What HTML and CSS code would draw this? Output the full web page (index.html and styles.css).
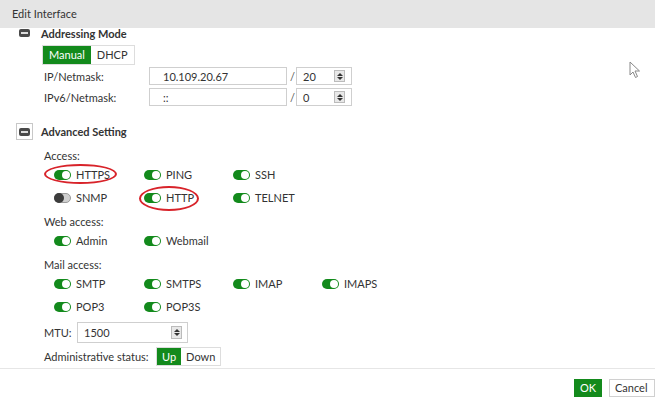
FILE: index.html
```html
<!DOCTYPE html>
<html>
<head>
<meta charset="utf-8">
<link rel="stylesheet" href="styles.css">
</head>
<body>
<div class="dialog">
  <div class="header">Edit Interface</div>
  <div class="body">
    <div class="section-title first"><span class="collapse plain"><span class="minus"></span></span>Addressing Mode</div>
    <div class="content">
      <div class="seg"><span class="seg-btn on">Manual</span><span class="seg-btn">DHCP</span></div>
      <div class="field-rows">
        <div class="field-row">
          <span class="flabel">IP/Netmask:</span>
          <span class="input wide">10.109.20.67</span>
          <span class="slash">/</span>
          <span class="input num">20<span class="spin"><i class="up"></i><i class="down"></i></span></span>
        </div>
        <div class="field-row">
          <span class="flabel">IPv6/Netmask:</span>
          <span class="input wide">::</span>
          <span class="slash">/</span>
          <span class="input num">0<span class="spin"><i class="up"></i><i class="down"></i></span></span>
        </div>
      </div>
    </div>

    <div class="section-title second"><span class="collapse"><span class="minus"></span></span>Advanced Setting</div>
    <div class="content">
      <div class="glabel first-label">Access:</div>
      <div class="toggles">
        <span class="tg"><span class="sw on"></span>HTTPS</span>
        <span class="tg"><span class="sw on"></span>PING</span>
        <span class="tg"><span class="sw on"></span>SSH</span>
        <span class="tg"></span>
        <span class="tg"><span class="sw off"></span>SNMP</span>
        <span class="tg"><span class="sw on"></span>HTTP</span>
        <span class="tg"><span class="sw on"></span>TELNET</span>
      </div>
      <div class="glabel">Web access:</div>
      <div class="toggles">
        <span class="tg"><span class="sw on"></span>Admin</span>
        <span class="tg"><span class="sw on"></span>Webmail</span>
      </div>
      <div class="glabel">Mail access:</div>
      <div class="toggles">
        <span class="tg"><span class="sw on"></span>SMTP</span>
        <span class="tg"><span class="sw on"></span>SMTPS</span>
        <span class="tg"><span class="sw on"></span>IMAP</span>
        <span class="tg"><span class="sw on"></span>IMAPS</span>
        <span class="tg"><span class="sw on"></span>POP3</span>
        <span class="tg"><span class="sw on"></span>POP3S</span>
      </div>
      <div class="mtu-row">
        <span class="mlabel">MTU:</span>
        <span class="input mtu">1500<span class="spin"><i class="up"></i><i class="down"></i></span></span>
      </div>
      <div class="status-row">
        <span class="slabel">Administrative status:</span>
        <span class="seg small"><span class="seg-btn on">Up</span><span class="seg-btn">Down</span></span>
      </div>
    </div>
  </div>
  <div class="footer">
    <span class="btn ok">OK</span>
    <span class="btn cancel">Cancel</span>
  </div>

  <span class="mark m1"></span>
  <span class="mark m2"></span>
  <svg class="cursor" width="12" height="18" viewBox="0 0 12 18"><path d="M1 1 L1 14 L4 11 L6.5 16.5 L8.5 15.5 L6 10 L10.5 10 Z" fill="#fff" stroke="#888" stroke-width="1" stroke-linejoin="round"/></svg>
</div>
</body>
</html>
```

FILE: styles.css
```css
* { box-sizing: border-box; }
body {
  margin: 0;
  font-family: Lato, "Open Sans", sans-serif;
  font-size: 11px;
  color: #333;
  background: #fff;
}
.dialog {
  width: 655px;
  height: 400px;
  display: flex;
  flex-direction: column;
  overflow: hidden;
  position: relative;
}
.header {
  flex: none;
  height: 28px;
  line-height: 28px;
  background: #e5e5e5;
  padding-left: 12px;
  position: relative;
  z-index: 1;
}
.body {
  flex: 1;
  overflow: hidden;
}
.section-title {
  display: flex;
  align-items: center;
  gap: 8px;
  height: 17px;
  padding-left: 16px;
  font-weight: bold;
}
.section-title.first { margin-top: -3px; height: 16px; }
.section-title.second { margin-top: 17px; }
.collapse {
  width: 17px;
  height: 17px;
  border: 1px solid #c8c8c8;
  display: flex;
  align-items: center;
  justify-content: center;
}
.collapse.plain { border-color: transparent; }
.minus {
  width: 11px;
  height: 8px;
  background: #4a4a4a;
  border-radius: 2px;
  display: flex;
  align-items: center;
  justify-content: center;
}
.minus::before {
  content: "";
  width: 7px;
  height: 2px;
  background: #ddd;
}
.content { padding-left: 44px; }
.seg {
  display: inline-flex;
  margin-top: 4px;
  margin-left: -2px;
  border: 1px solid #ddd;
}
.seg-btn {
  height: 18px;
  line-height: 18px;
  padding: 0 6px;
  background: #fff;
}
.seg-btn.on { background: #138a1c; color: #fff; }
.field-rows {
  display: flex;
  flex-direction: column;
  gap: 3px;
  margin-top: 2px;
}
.field-row {
  display: flex;
  align-items: center;
  height: 18px;
}
.flabel { width: 105px; }
.input {
  height: 18px;
  border: 1px solid #cfcfcf;
  display: flex;
  align-items: center;
  padding-left: 11px;
  position: relative;
}
.wide { width: 138px; padding-left: 13px; }
.slash { width: 9px; padding-left: 3px; color: #555; }
.num { width: 56px; padding-left: 6px; }
.spin {
  margin-left: auto;
  margin-right: 6px;
  width: 11px;
  height: 12px;
  border: 1px solid #bbb;
  background: #e8e8e8;
  display: flex;
  flex-direction: column;
  align-items: center;
  justify-content: center;
  gap: 1px;
}
.spin i {
  width: 0;
  height: 0;
  border-left: 3px solid transparent;
  border-right: 3px solid transparent;
}
.spin .up { border-bottom: 3px solid #333; }
.spin .down { border-top: 3px solid #333; }
.glabel {
  height: 14px;
  line-height: 14px;
  margin-top: 6px;
}
.glabel.first-label { margin-top: 9px; }
.toggles {
  display: grid;
  grid-template-columns: 90px 89px 89px 89px;
  grid-auto-rows: 23px;
  padding-left: 10px;
}
.tg {
  display: flex;
  align-items: center;
  gap: 5px;
}
.sw {
  width: 17px;
  height: 10px;
  border-radius: 5px;
  position: relative;
  flex: none;
}
.sw::after {
  content: "";
  position: absolute;
  top: 1px;
  width: 8px;
  height: 8px;
  border-radius: 50%;
}
.sw.on { background: #138a1c; }
.sw.on::after { right: 1px; background: #fff; }
.sw.off { background: #cfcfcf; border: 1px solid #9a9a9a; }
.sw.off::after { left: -1px; top: -1px; width: 10px; height: 10px; background: #3c3c3c; }
.mtu-row {
  display: flex;
  align-items: center;
  margin-top: 4px;
  height: 21px;
}
.mlabel { width: 33px; }
.mtu { width: 111px; height: 21px; padding-left: 6px; }
.mtu .spin { margin-right: 5px; height: 13px; }
.status-row {
  display: flex;
  align-items: center;
  margin-top: 4px;
  height: 18px;
}
.slabel { width: 112px; }
.seg.small { margin: 0; }
.seg.small .seg-btn { height: 17px; line-height: 17px; padding: 0 5px; }
.footer {
  flex: none;
  height: 32px;
  border-top: 1px solid #e6e6e6;
  display: flex;
  justify-content: flex-end;
  align-items: flex-start;
  gap: 7px;
  padding-top: 10px;
}
.btn {
  height: 18px;
  line-height: 18px;
  padding: 0 6px;
}
.btn.ok { background: #138a1c; color: #fff; width: 28px; text-align: center; padding: 0; }
.btn.cancel { border: 1px solid #d0d0d0; line-height: 16px; width: 46px; padding-left: 5px; }
.mark {
  position: absolute;
  border: 2px solid #d8232a;
  border-radius: 50%;
}
.m1 { left: 44px; top: 164px; width: 73px; height: 20px; }
.m2 { left: 139px; top: 186px; width: 60px; height: 25px; }
.cursor {
  position: absolute;
  left: 629px;
  top: 61px;
}
```
